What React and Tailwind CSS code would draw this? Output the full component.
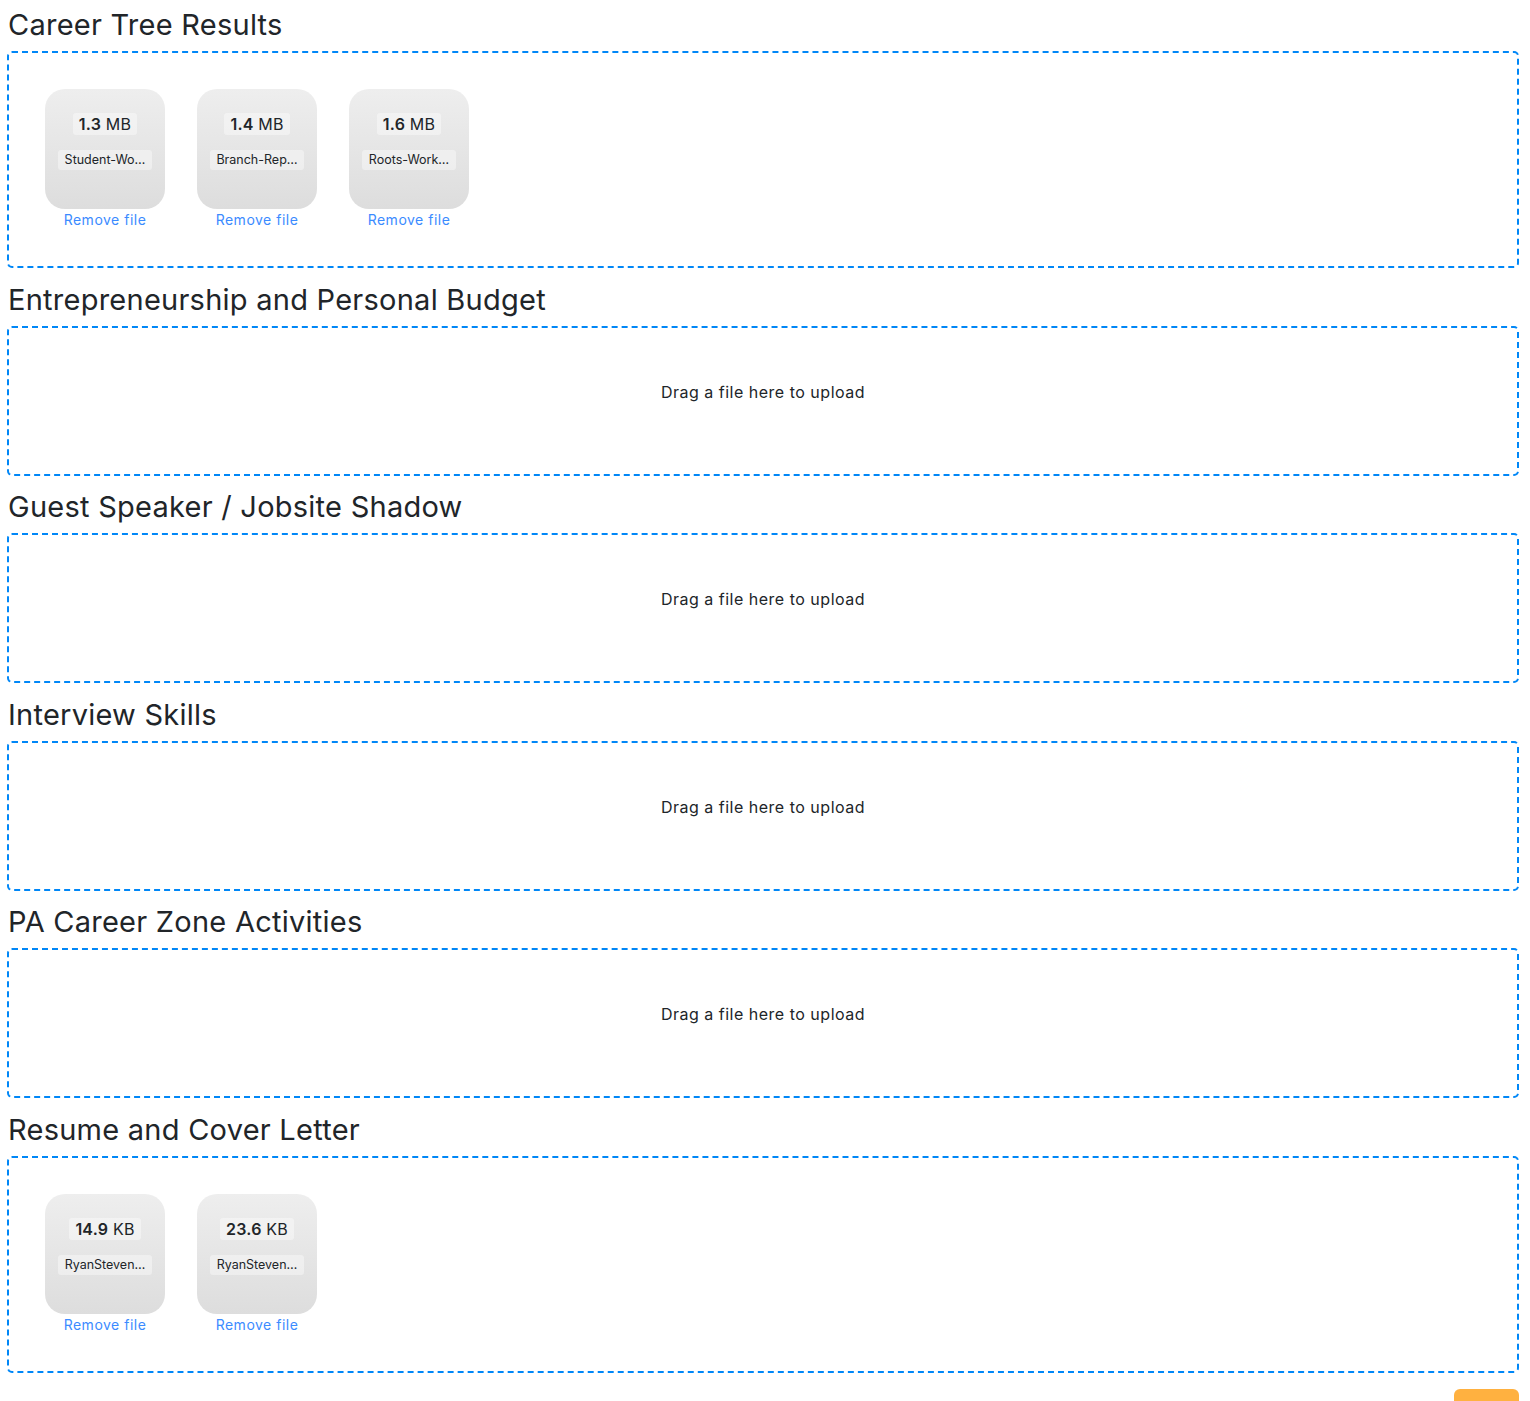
const font = { fontFamily: '"Inter", "Noto Sans", sans-serif' };

const sections = [
  {
    title: 'Career Tree Results',
    files: [
      { size: '1.3', unit: 'MB', name: 'Student-Wo…' },
      { size: '1.4', unit: 'MB', name: 'Branch-Rep…' },
      { size: '1.6', unit: 'MB', name: 'Roots-Work…' },
    ],
  },
  { title: 'Entrepreneurship and Personal Budget', files: [] },
  { title: 'Guest Speaker / Jobsite Shadow', files: [] },
  { title: 'Interview Skills', files: [] },
  { title: 'PA Career Zone Activities', files: [] },
  {
    title: 'Resume and Cover Letter',
    files: [
      { size: '14.9', unit: 'KB', name: 'RyanSteven…' },
      { size: '23.6', unit: 'KB', name: 'RyanSteven…' },
    ],
  },
];

function Preview({ file }) {
  return (
    <div className="m-4 w-[120px]">
      <div className="relative h-[120px] w-[120px] rounded-[20px] bg-gradient-to-b from-[#eeeeee] to-[#dddddd]">
        <div className="absolute inset-x-0 top-0 px-[13px] pt-[24px] text-center text-[13px] leading-[19.5px] text-[#212529]">
          <div className="mb-[15px] text-[16px]">
            <span className="inline-block h-[22px] rounded-[3px] bg-white/40 px-[6px] leading-[22px] tracking-[0.2px]">
              <strong className="font-semibold">{file.size}</strong> {file.unit}
            </span>
          </div>
          <div className="overflow-hidden whitespace-nowrap rounded-[3px] bg-white/40 px-[5px] text-[12.5px] leading-[20px]">
            {file.name}
          </div>
        </div>
      </div>
      <a href="#" className="block text-center text-[14px] leading-[21px] tracking-[0.5px] text-[#3b8bff]">
        Remove file
      </a>
    </div>
  );
}

function Dropzone({ files }) {
  return (
    <div className="min-h-[150px] rounded-[5px] border-2 border-dashed border-[#0087f7] p-5">
      {files.length > 0 ? (
        <div className="flex flex-wrap">
          {files.map((f, i) => (
            <Preview key={i} file={f} />
          ))}
        </div>
      ) : (
        <div className="my-8 text-center text-[16px] leading-6 tracking-[0.5px] text-[#212529]">
          Drag a file here to upload
        </div>
      )}
    </div>
  );
}

export default function App() {
  return (
    <div className="bg-white pl-[7px] pr-[11px] pb-4" style={font}>
      <div className="flex flex-col gap-[6.5px]">
        {sections.map((s) => (
          <section key={s.title}>
            <h3 className="mb-2 pl-px pt-[7px] text-[29px] font-normal leading-[36px] tracking-[0.25px] text-[#212529]">
              {s.title}
            </h3>
            <Dropzone files={s.files} />
          </section>
        ))}
      </div>
      <div className="mt-4 flex justify-end">
        <button className="h-9 w-[65px] rounded-md bg-[#ffb140] text-sm text-white">Save</button>
      </div>
    </div>
  );
}
